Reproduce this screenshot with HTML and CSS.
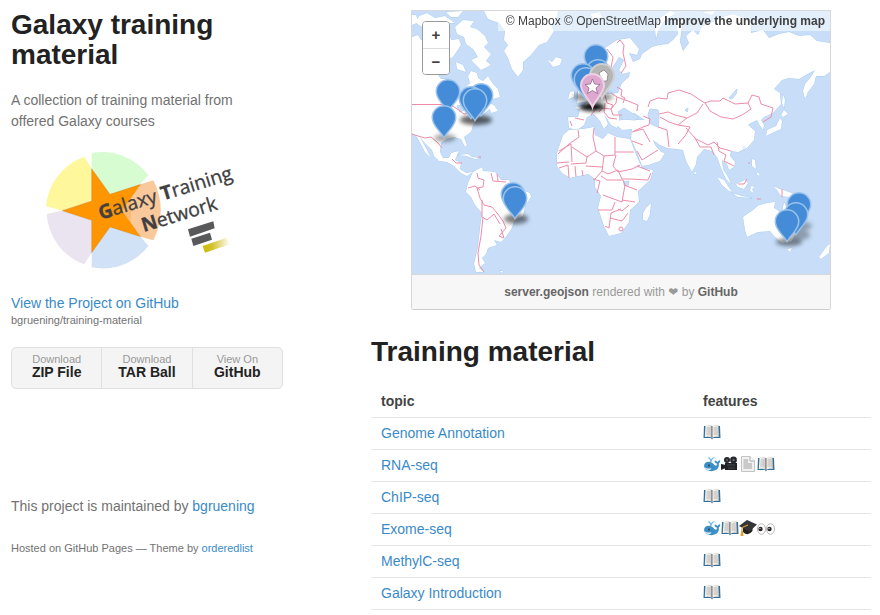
FILE: index.html
```html
<!DOCTYPE html>
<html lang="en">
<head>
<meta charset="utf-8">
<title>Galaxy training material</title>
<link rel="stylesheet" href="styles.css">
</head>
<body>
<svg class="sprites" aria-hidden="true">
  <defs>
    <linearGradient id="page" x1="0" x2="1"><stop offset="0" stop-color="#f4f4f2"/><stop offset=".75" stop-color="#e4e2dd"/><stop offset="1" stop-color="#a8a5a0"/></linearGradient>
    <symbol id="book" viewBox="0 0 18 16">
      <path d="M1 2 L.5 14 H8 L9 15.500 L10 14 H17.500 L17 2Z" fill="#2f719c"/>
      <path d="M2.500 1.200 Q6.500 .2 9 2 V14 Q6 12 1.800 13Z" fill="url(#page)"/>
      <path d="M15.500 1.200 Q11.500 .2 9 2 V14 Q12 12 16.200 13Z" fill="url(#page)"/>
      <path d="M3.800 4 H7.500 M3.600 6 H7.500 M3.400 8 H7.500 M3.200 10 H7.500 M10.500 4 H14.200 M10.500 6 H14.400 M10.500 8 H14.600 M10.500 10 H14.800" stroke="#b2b0ac" stroke-width=".8"/>
      <path d="M9 2 V14" stroke="#666" stroke-width=".9"/>
    </symbol>
    <symbol id="whale" viewBox="0 0 18 16">
      <path d="M8 6 Q8 3 5.500 1.500 M8 6 Q8 2.500 11.500 1.500" fill="none" stroke="#70b8df" stroke-width="1.200"/>
      <path d="M1 10 Q1.500 5.500 6.500 5.800 Q9.500 6 11.500 9 Q14 11 14 7.500 Q11.500 7.300 11.500 4.500 Q13.500 4.600 14.500 6 Q15.500 4 17.200 4.200 Q17.500 6.500 15.800 7.600 Q16.500 13 11.500 14.500 Q7 16 3.500 14 Q1 12.500 1 10Z" fill="#3c8fc4"/>
      <path d="M1.300 11 Q4.500 13.500 8.500 12 Q7.500 15.500 4 14 Q2 13 1.300 11Z" fill="#dcebf2"/>
      <circle cx="6" cy="9.500" r=".9" fill="#173b56"/>
    </symbol>
    <symbol id="camera" viewBox="0 0 18 16">
      <circle cx="6" cy="4" r="3" fill="#25272a"/><circle cx="12.500" cy="4" r="3.400" fill="#25272a"/>
      <path d="M4 7 H16 V14 H4Z M0 8 L5 9 V12 L0 14Z" fill="#202225"/>
      <circle cx="6" cy="4" r="1" fill="#666"/><circle cx="12.500" cy="4" r="1.200" fill="#666"/>
      <path d="M6 9 H14 M7 12 H14" stroke="#555" stroke-width=".8"/>
    </symbol>
    <symbol id="doc" viewBox="0 0 18 16">
      <path d="M2.500 .5 H11 L15.500 5 V15.500 H2.500Z" fill="#f1f1f1" stroke="#c4c4c4"/>
      <path d="M11 .5 V5 H15.500" fill="#fff" stroke="#aaa"/>
      <path d="M4.500 4 H9 M4.500 6 H9 M4.500 8 H13 M4.500 10 H13 M4.500 12 H13" stroke="#999" stroke-width=".9"/>
    </symbol>
    <symbol id="cap" viewBox="0 0 18 16">
      <path d="M4 6 V12 Q9 17 13.500 11 V6Z" fill="#202020"/>
      <path d="M0 6 L8 0 L18 4.500 L10.500 11.500Z" fill="#35363a"/>
      <path d="M9 5 L3 7.500 V12" fill="none" stroke="#e0a22c" stroke-width="1.100"/>
      <path d="M2 11 H4 L4.500 16 H1.500Z" fill="#e0a22c"/>
    </symbol>
    <symbol id="eyes" viewBox="0 0 18 16">
      <g fill="#fff" stroke="#bbb"><ellipse cx="4.500" cy="9" rx="4" ry="5.300"/><ellipse cx="13.500" cy="9" rx="4" ry="5.300"/></g>
      <g fill="#2b2624"><circle cx="3.500" cy="9" r="2.200"/><circle cx="12.500" cy="9" r="2.200"/></g>
      <g fill="#fff"><circle cx="3" cy="8.300" r=".6"/><circle cx="12" cy="8.300" r=".6"/></g>
    </symbol>
    <symbol id="pin" viewBox="-15 -36 30 38" overflow="visible">
      <path d="M0 0 C-2 -5 -12.500 -13 -12.500 -21.500 A12.500 12.500 0 0 1 12.500 -21.500 C12.500 -13 2 -5 0 0Z" fill="#9bc3ec"/>
      <path d="M0 -2.500 C-2 -7 -11 -14 -11 -21.500 A11 11 0 0 1 11 -21.500 C11 -14 2 -7 0 -2.500Z" fill="#458cd8"/>
    </symbol>
    <filter id="soft" x="-50%" y="-50%" width="200%" height="200%"><feGaussianBlur stdDeviation="2.200"/></filter>
  </defs>
</svg>
<div class="wrapper">
  <header class="side">
    <h1>Galaxy training material</h1>
    <p class="lead">A collection of training material from offered Galaxy courses</p>
    <svg class="logo" viewBox="-57 15 720 390" role="img" aria-label="Galaxy Training Network">
      <defs><linearGradient id="gold"><stop offset="0" stop-color="#cdbb00"/><stop offset=".35" stop-color="#d4c12c"/><stop offset="1" stop-color="#fff"/></linearGradient></defs>
      <path d="M163 47 A173 173 0 0 0 48 195 L97 209 L185 180 V83Z" fill="#fff79c"/>
      <path d="M185 36 A173 173 0 0 1 355 103 L330 130 L240 160 L185 83Z" fill="#d7fcd1"/>
      <path d="M50 219 A173 173 0 0 0 162 370 L185 335 V238 L97 209Z" fill="#eae4f1"/>
      <path d="M185 335 L240 258 L332 287 L355 315 A173 173 0 0 1 185 379Z" fill="#d1e1f6"/>
      <path d="M185 83 L240 160 L332 130 L303 209 L332 287 L240 258 L185 335 V238 L97 209 L185 180Z" fill="#ff9500" stroke="#a97830" stroke-width="1"/>
      <path d="M332 130 L370 118 Q415 208 370 298 L332 287 L276 209Z" fill="#f9c99b"/>
      <path d="M332 130 L276 209 L332 287 L303 250 V170Z" fill="#ff9500" opacity=".25"/>
      <g class="logo-text">
        <text transform="translate(212 236) rotate(-17)"><tspan class="initial">G</tspan>alaxy <tspan class="initial">T</tspan>raining</text>
        <text transform="translate(341 273) rotate(-17)"><tspan class="initial">N</tspan>etwork</text>
      </g>
      <path d="M474 265 L550 241 L554 262 L480 287Z M484 293 L540 275 L546 296 L490 315Z" fill="#58595b"/>
      <path d="M518 315 L590 290 L600 310 L525 335Z" fill="url(#gold)"/>
    </svg>
    <p class="view"><a href="#">View the Project on GitHub <small>bgruening/training-material</small></a></p>
    <ul class="downloads">
      <li><a href="#">Download <strong>ZIP File</strong></a></li>
      <li><a href="#">Download <strong>TAR Ball</strong></a></li>
      <li><a href="#">View On <strong>GitHub</strong></a></li>
    </ul>
    <footer class="credits">
      <p>This project is maintained by <a href="#">bgruening</a></p>
      <p class="hosted">Hosted on GitHub Pages — Theme by <a href="#">orderedlist</a></p>
    </footer>
  </header>
  <main>
    <section class="map" aria-label="Server map">
      <div class="map-view">
        <svg class="world" viewBox="412 11 418 263" aria-hidden="true">
          <g class="land">
            <path d="M412 37 L418 35 421 40 430 38 437 42 444 37 449 32 451 40 459 39 461 45 457 51 453 57 447 60 442 68 438 75 441 79 449 79 456 85 459 93 463 96 464 89 470 83 468 76 471 71 477 73 478 78 483 81 488 76 493 84 498 89 500 97 493 99 488 103 494 105 498 111 491 113 490 109 482 115 477 120 473 125 471 132 464 137 467 145 465 147 461 139 454 137 447 139 441 143 440 152 443 158 449 158 451 153 459 151 455 160 461 163 460 169 466 173 473 172 467 176 461 173 454 166 447 162 439 161 434 156 432 150 424 142 420 137 427 150 431 158 425 152 417 137 412 133Z"/>
            <path d="M419 16 L427 13 435 18 445 16 455 23 446 23 440 28 432 25 425 29 416 23Z M446 12 L463 11 458 17 451 17Z M455 27 L463 20 474 21 470 27 477 29 485 36 488 43 484 47 491 54 486 61 491 65 481 70 475 64 471 60 478 57 473 49 466 44 464 37 457 34Z M456 62 L463 65 466 72 457 69Z M432 31 L440 30 444 36 436 39Z M412 15 L416 15 419 22 412 25Z"/>
            <path d="M484 11 H558 L557 18 551 25 554 31 547 42 539 45 531 55 523 62 523 70 518 77 512 69 508 58 504 51 508 45 504 40 505 31 499 23 488 19Z M547 59 L552 62 556 57 562 59 560 65 553 67Z M570 92 L574 91 574 97 568 99Z M578 85 L584 87 586 94 590 101 577 103 578 96Z"/>
            <path d="M473 172 L482 167 483 171 495 172 501 180 509 180 512 187 522 190 530 193 531 197 525 206 523 216 514 221 512 228 505 238 501 242 494 240 497 245 488 248 486 254 482 258 485 263 479 268 484 272 476 272 474 264 478 247 480 228 482 213 475 205 471 197 466 192 468 183Z M503 271 L499 271 503 273Z M457 155 L468 154 472 157 481 158 475 159 466 156Z"/>
            <path d="M596 82 L602 72 605 48 617 40 630 38 639 49 637 55 629 53 633 62 640 59 642 54 652 47 659 45 668 44 673 40 678 34 676 23 683 18 681 33 680 42 683 51 689 43 686 36 693 30 698 35 702 26 711 23 723 17 733 14 744 18 751 23 751 33 763 30 769 38 779 34 789 32 799 36 810 35 817 41 830 43 V72 L824 76 816 76 814 84 808 92 805 99 803 91 805 84 811 77 815 70 804 76 799 79 789 78 782 80 774 89 780 93 781 104 773 113 764 117 761 120 764 125 763 130 759 124 757 120 751 123 748 125 755 131 754 140 747 148 738 152 731 151 730 156 735 162 734 167 729 170 727 164 722 160 723 169 728 177 731 184 726 179 721 168 717 157 712 151 704 149 697 157 696 164 692 172 686 161 683 150 676 149 667 148 660 145 653 140 655 145 661 152 665 153 660 161 648 165 642 166 637 152 631 139 632 129 622 130 616 124 617 121 626 119 637 120 645 120 634 113 629 114 619 112 619 120 617 128 611 125 604 114 608 124 604 129 600 121 594 114 587 117 584 125 577 130 569 128 568 117 578 117 580 110 574 107 583 106 589 101 597 96 604 93 604 85 607 94 618 93 622 83 629 77 630 72 623 74 619 70 624 60 619 57 612 68 613 78 609 85 605 81 602 85Z"/>
            <path d="M563 135 L569 130 583 129 594 127 595 135 603 139 608 133 617 137 630 139 637 157 642 168 653 170 650 180 638 191 639 202 630 210 629 222 621 233 609 236 604 226 598 208 601 196 595 187 595 179 588 174 570 178 562 173 557 166 557 153Z M651 203 L650 214 647 221 643 220 643 213 646 208Z"/>
            <path d="M743 217 L753 210 759 205 767 203 775 202 774 208 782 213 784 202 787 208 795 221 798 231 791 242 782 243 774 236 770 231 758 232 747 237 745 230Z M787 249 L792 248 790 252Z M827 246 L830 244 829 253 821 259 819 257Z M773 186 L780 189 792 193 800 202 789 197 781 196 777 190Z M717 177 L724 180 732 192 729 191 722 185Z M732 193 L742 196 752 198 738 197Z M736 184 L745 180 748 183 744 189 738 187Z M751 186 L755 187 752 189 754 193 750 191Z M752 159 L755 160 756 169 752 166Z M756 172 L760 174 758 176Z M743 147 L745 147 744 151Z M695 171 L697 174 694 174Z M767 130 L776 126 780 118 782 121 781 129 772 133 766 136Z M781 115 L784 110 788 114 783 117Z M783 94 L785 100 784 108 782 103Z"/>
            <path d="M656 39 L658 31 665 20 676 13 670 11 660 18 655 29Z M590 14 L600 12 602 17 594 20Z M702 12 L715 11 712 15Z"/>
          </g>
          <g class="water">
            <path d="M618 112 L624 108 630 112 639 117 635 120 622 119Z M650 109 L658 110 659 118 658 127 651 124 648 115Z M729 98 L737 89 736 94 732 99Z M624 182 L629 181 628 186 624 185Z M685 110 L688 108 687 112Z M457 106 L462 105 464 110 460 112Z"/>
          </g>
          <g class="borders">
            <path d="M412 104.500 H449 L456 108 464 114 473 112 481 105 M412 134 L418 136 425 138 431 137 438 143 442 148 M452 159 L456 163 462 163 M477 173 L478 178 484 180 483 187 477 188 480 198 M468 188 L475 186 480 190 M491 173 L493 181 506 182 M497 174 L498 181 M480 198 L484 205 492 207 497 213 503 221 506 228 499 236 M482 200 L482 217 487 220 494 214 500 224 M483 217 L481 236 478 253 479 265 484 272 M499 236 L504 238 501 229"/>
            <path d="M607 49 L613 57 611 68 M617 43 L620 40 624 45 623 53 626 66 621 73 M605 95 L607 103 613 105 611 109 602 108 599 112 M611 93 L617 97 616 103 611 109 613 115 622 115 M617 87 L622 90 621 96 625 98 623 103 M617 97 L628 101 638 105 637 111 M605 103 L604 112 609 118 617 119 M588 105 L593 108 598 107 M591 115 L596 109 M575 118 L584 120 M570 121 L572 126"/>
            <path d="M648 107 L650 101 658 98 667 99 668 93 679 90 691 94 700 100 705 103 710 101 720 101 723 98 735 104 748 103 752 95 759 97 761 104 773 108 771 117 763 122 M705 103 L710 111 721 117 733 119 742 115 751 109 748 103 M703 104 L697 113 687 118 675 115 668 112 659 114 M660 117 L669 122 678 125 687 118 M658 127 L667 130 669 147 M678 125 L690 127 685 136 678 144 M686 128 L696 139 708 145 714 142 720 148 M643 116 L650 119 649 125 643 127 634 131 M632 132 L643 129 650 142 M632 141 L643 145 M695 138 L700 147 711 147 714 155 M717 142 L719 151 726 155 724 161 734 166 M720 148 L731 151"/>
            <path d="M578 130 L579 137 569 144 558 154 M572 147 L587 157 586 163 571 164 M594 128 L593 137 596 151 587 157 M596 151 L604 156 615 155 V137 M615 152 H634 M616 155 L613 166 618 172 632 169 640 165 M604 156 L602 171 595 179 M557 163 L569 162 M559 168 L568 165 569 178 M575 166 L576 177 M582 170 L583 176 M586 166 L602 167 M602 171 L608 174 618 170 622 179 630 179 648 180 651 173 M601 176 L607 180 623 180 625 185 622 202 611 198 603 195 M624 185 L637 190 M622 200 L635 202 M598 210 H612 L615 202 M611 213 L609 228 605 226 M610 218 L622 221 628 213 M618 209 L622 211 629 205 M637 166 L650 171 M637 151 L642 160 658 150 M559 151 L571 144 572 162 M593 179 L600 181 597 193 M611 213 L621 209"/>
            <circle cx="621" cy="229" r="2"/>
            <path d="M738 184 L744 184 747 179 M782 189 V197 M757 199 H761 M478 157 H481 M748 163 H750"/>
          </g>
          <g class="shadows" filter="url(#soft)">
            <ellipse cx="445" cy="138" rx="11" ry="4" opacity=".35"/><ellipse cx="476" cy="120" rx="16" ry="5" opacity=".6"/>
            <ellipse cx="592" cy="107" rx="13" ry="4" opacity=".95"/><ellipse cx="593" cy="97" rx="20" ry="5" opacity=".4"/>
            <ellipse cx="516" cy="219" rx="12" ry="5" opacity=".5"/><ellipse cx="789" cy="242" rx="13" ry="4" opacity=".45"/>
            <ellipse cx="800" cy="235" rx="10" ry="5" opacity=".3"/><ellipse cx="803" cy="226" rx="9" ry="4" opacity=".3"/>
          </g>
          <g class="pins">
            <use href="#pin" x="433" y="77" width="30" height="38"/><use href="#pin" x="429" y="103" width="30" height="38"/>
            <use href="#pin" x="466" y="81" width="30" height="38"/><use href="#pin" x="456" y="84" width="30" height="38"/><use href="#pin" x="460" y="86" width="30" height="38"/>
            <use href="#pin" x="581" y="42" width="30" height="38"/><use href="#pin" x="583" y="57" width="30" height="38"/>
            <use href="#pin" x="568" y="61" width="30" height="38"/><use href="#pin" x="571" y="65" width="30" height="38"/>
            <path d="M602 98 C600 92 590 84 590 76 A12 12 0 0 1 614 76 C614 84 604 92 602 98Z" fill="#b5b5b5" stroke="#cfcfcf" stroke-width="2"/>
            <path d="M599 73 L604 70 608 74 607 81 602 81Z" fill="#fff" stroke="#777" stroke-width=".7"/>
            <path d="M592.500 107 C590.500 101 581 93 581 85.500 A11.500 11.500 0 0 1 604 85.500 C604 93 594.500 101 592.500 107Z" fill="#dfa8d0" stroke="#ecd0e4" stroke-width="2"/>
            <path d="M592.500 79 L594.500 84 600 84.500 596 88 597.500 93.500 592.500 90.500 587.500 93.500 589 88 585 84.500 590.500 84Z" fill="#fff" stroke="#805c77" stroke-width=".7"/>
            <use href="#pin" x="498" y="180" width="30" height="38"/><use href="#pin" x="500" y="184" width="30" height="38"/>
            <use href="#pin" x="784" y="190" width="30" height="38"/><use href="#pin" x="781" y="200" width="30" height="38"/><use href="#pin" x="772" y="207" width="30" height="38"/>
          </g>
        </svg>
        <div class="zoom"><button type="button" aria-label="Zoom in">+</button><button type="button" aria-label="Zoom out">−</button></div>
        <p class="attribution"><a href="#">© Mapbox</a> <a href="#">© OpenStreetMap</a> <a class="improve" href="#">Improve the underlying map</a></p>
      </div>
      <p class="map-meta"><a href="#">server.geojson</a> rendered with <span class="heart">❤</span> by <a href="#">GitHub</a></p>
    </section>
    <h2>Training material</h2>
    <table>
      <thead><tr><th class="topic">topic</th><th>features</th></tr></thead>
      <tbody>
        <tr><td><a href="#">Genome Annotation</a></td><td><span class="icons"><svg><use href="#book"/></svg></span></td></tr>
        <tr><td><a href="#">RNA-seq</a></td><td><span class="icons"><svg><use href="#whale"/></svg><svg><use href="#camera"/></svg><svg><use href="#doc"/></svg><svg><use href="#book"/></svg></span></td></tr>
        <tr><td><a href="#">ChIP-seq</a></td><td><span class="icons"><svg><use href="#book"/></svg></span></td></tr>
        <tr><td><a href="#">Exome-seq</a></td><td><span class="icons"><svg><use href="#whale"/></svg><svg><use href="#book"/></svg><svg><use href="#cap"/></svg><svg><use href="#eyes"/></svg></span></td></tr>
        <tr><td><a href="#">MethylC-seq</a></td><td><span class="icons"><svg><use href="#book"/></svg></span></td></tr>
        <tr><td><a href="#">Galaxy Introduction</a></td><td><span class="icons"><svg><use href="#book"/></svg></span></td></tr>
      </tbody>
    </table>
  </main>
</div>
</body>
</html>
```
FILE: styles.css
```css
* { box-sizing: border-box; }
body {
  margin: 0;
  background: #fff;
  color: #727272;
  font: 14px/21px "Liberation Sans", Helvetica, Arial, sans-serif;
}
h1, h2, p, ul { margin: 0; padding: 0; }
a { color: #3a8ac8; text-decoration: none; }
.sprites { position: absolute; width: 0; height: 0; }
.wrapper {
  display: grid;
  grid-template-columns: 272px 1fr;
  gap: 88px;
  padding: 10px 9px 0 11px;
}
h1, h2 { color: #222; font-size: 28px; line-height: 30px; }
.lead { margin-top: 20px; padding-right: 32px; }
.logo { display: block; width: 240px; margin: 14px 0 17px; }
.view small { display: block; color: #727272; font-size: 11px; line-height: 12px; }
.downloads {
  display: flex;
  margin-top: 21px;
  list-style: none;
  background: #f4f4f4;
  border: 1px solid #e0e0e0;
  border-radius: 5px;
}
.downloads li { flex: 1; }
.downloads li + li { border-left: 1px solid #e0e0e0; }
.downloads a {
  display: block;
  height: 40px;
  padding-top: 5px;
  color: #999;
  font-size: 11px;
  line-height: 13px;
  text-align: center;
}
.downloads strong { display: block; color: #222; font-size: 14px; }
.credits { margin-top: 107px; }
.hosted { margin-top: 21px; font-size: 11px; }
.map {
  margin: 0 40px;
  border: 1px solid #d8d8d8;
  border-bottom-color: #ccc;
  border-radius: 0 0 3px 3px;
  overflow: hidden;
}
.map-view { position: relative; background: #c8def8; }
.world { display: block; width: 100%; }
.land { fill: #fff; stroke: #a9cdf3; stroke-width: 1; paint-order: stroke; stroke-linejoin: round; }
.water { fill: #c8def8; stroke: #a9cdf3; stroke-width: 1; paint-order: stroke; }
.borders { fill: none; stroke: #ec8ca8; stroke-width: 1; stroke-linejoin: round; }
.shadows { fill: #000; }
.zoom {
  position: absolute;
  top: 10px;
  left: 10px;
  width: 28px;
  background: #fff;
  border: 1px solid #999;
  border-radius: 4px;
  overflow: hidden;
}
.zoom button {
  display: block;
  width: 100%;
  height: 26px;
  padding: 0;
  background: #fff;
  border: 0;
  color: #404040;
  font: bold 15px/20px "Liberation Sans", Arial, sans-serif;
}
.zoom button + button { border-top: 1px solid #ddd; }
.attribution {
  position: absolute;
  top: 0;
  right: 0;
  padding: 0 5px 0 8px;
  background: rgba(255, 255, 255, 0.5);
  font-size: 12px;
  line-height: 20px;
  white-space: nowrap;
}
.attribution a { color: #404040; }
.attribution .improve { font-weight: bold; }
.map-meta {
  border-top: 1px solid #d8d8d8;
  background: #f7f7f7;
  color: #999;
  font-size: 12px;
  line-height: 34px;
  text-align: center;
}
.map-meta a { color: #666; font-weight: bold; }
.heart { font-family: "DejaVu Sans", sans-serif; }
h2 { margin: 27px 0 20px; }
table { width: 100%; border-collapse: collapse; }
th, td { height: 32px; padding: 0 10px; border-bottom: 1px solid #e5e5e5; text-align: left; }
th { height: 30px; color: #444; }
.topic { width: 322px; }
.icons { display: flex; padding-bottom: 2px; }
.icons svg { width: 18px; height: 16px; }
.logo-text { fill: #404041; stroke: #404041; stroke-width: 1; font-family: "Open Sans", "Noto Sans", sans-serif; font-size: 58px; }
.initial { font-weight: bold; }
```
